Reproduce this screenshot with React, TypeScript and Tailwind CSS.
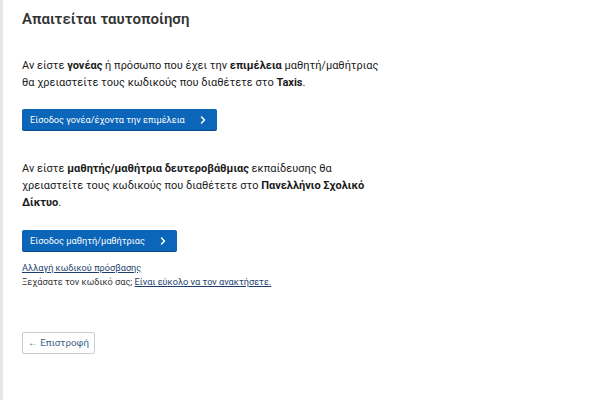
import { ChevronRight } from "lucide-react";

const font = { fontFamily: "Roboto, 'Noto Sans', sans-serif" };

export default function App() {
  return (
    <div className="flex h-[400px] w-[600px] bg-white text-[#1b1b1b]" style={font}>
      <div className="w-[3px] shrink-0 bg-[#e6e6e6]" />
      <main className="flex flex-col pl-[19px] pt-[9px]">
        <h1 className="text-[15px] font-semibold leading-[20px] text-[#333]">Απαιτείται ταυτοποίηση</h1>

        <p className="mt-[28px] text-[11px] leading-[17px]">
          Αν είστε <b>γονέας</b> ή πρόσωπο που έχει την <b>επιμέλεια</b> μαθητή/μαθήτριας
          <br />
          θα χρειαστείτε τους κωδικούς που διαθέτετε στο <b>Taxis</b>.
        </p>
        <div className="mt-[18px]">
          <button className="flex h-[21px] items-center gap-[12px] rounded-[2px] bg-[#0b65b8] pl-[8px] pr-[8px] text-[9.2px] text-white shadow-[0_1px_0_#0a4b87]">
            Είσοδος γονέα/έχοντα την επιμέλεια
            <ChevronRight size={12} strokeWidth={3} />
          </button>
        </div>

        <p className="mt-[30px] text-[11px] leading-[17px]">
          Αν είστε <b>μαθητής/μαθήτρια δευτεροβάθμιας</b> εκπαίδευσης θα
          <br />
          χρειαστείτε τους κωδικούς που διαθέτετε στο <b>Πανελλήνιο Σχολικό</b>
          <br />
          <b>Δίκτυο</b>.
        </p>
        <div className="mt-[19px]">
          <button className="flex h-[21px] items-center gap-[12px] rounded-[2px] bg-[#0b65b8] pl-[8px] pr-[8px] text-[9.2px] text-white shadow-[0_1px_0_#0a4b87]">
            Είσοδος μαθητή/μαθήτριας
            <ChevronRight size={12} strokeWidth={3} />
          </button>
        </div>

        <div className="mt-[10px] text-[9.2px] leading-[14px] text-[#333]">
          <a className="text-[#1d3f6e] underline" href="#">Αλλαγή κωδικού πρόσβασης</a>
          <br />
          Ξεχάσατε τον κωδικό σας; <a className="text-[#1d3f6e] underline" href="#">Είναι εύκολο να τον ανακτήσετε.</a>
        </div>

        <div className="mt-[43px]">
          <button className="flex h-[22px] items-center rounded-[2px] border border-[#c9ced4] bg-white px-[5px] text-[9.8px] text-[#3a5f86]">
            ← Επιστροφή
          </button>
        </div>
      </main>
    </div>
  );
}
